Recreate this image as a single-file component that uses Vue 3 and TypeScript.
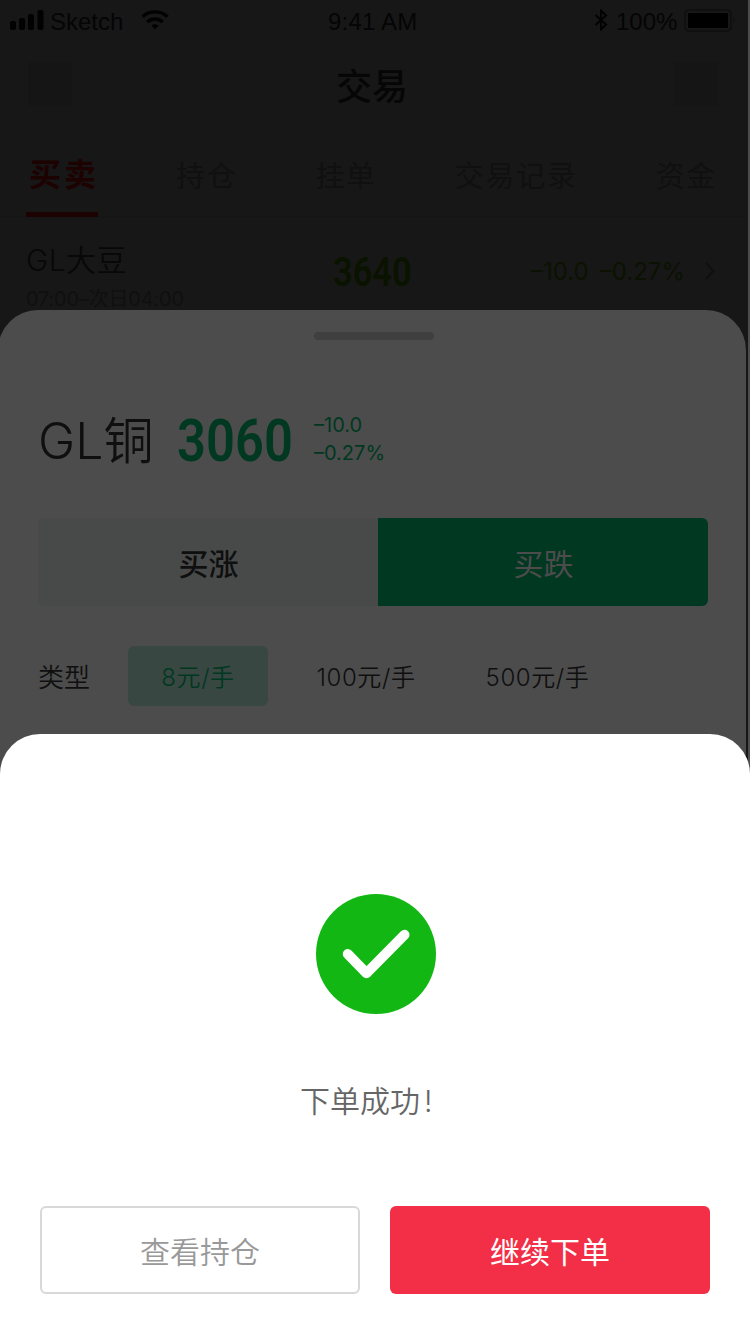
<script setup lang="ts">
interface Tab {
  label: string
  active?: boolean
}

const tabs: Tab[] = [
  { label: '买卖', active: true },
  { label: '持仓' },
  { label: '挂单' },
  { label: '交易记录' },
  { label: '资金' },
]

const lots: Tab[] = [
  { label: '8元/手', active: true },
  { label: '100元/手' },
  { label: '500元/手' },
]
</script>

<template>
  <div class="screen">
    <div class="page">
      <div class="status">
        <svg class="signal" viewBox="0 0 34 22" width="34" height="22">
          <rect x="0" y="13" width="6" height="9" rx="2" />
          <rect x="9" y="10" width="6" height="12" rx="2" />
          <rect x="18" y="6" width="6" height="16" rx="2" />
          <rect x="27.5" y="2" width="6" height="20" rx="2" />
        </svg>
        <span class="carrier">Sketch</span>
        <svg class="wifi" viewBox="0 0 28 20" width="28" height="20">
          <path d="M1.5 6.8C8.5 .2 19.5 .2 26.500 6.8" />
          <path d="M6.300 12C10.700 8 17.300 8 21.700 12" />
          <path class="solid" d="M14 19.500L10.400 15.600Q14 12.800 17.600 15.600Z" />
        </svg>
        <span class="time">9:41 AM</span>
        <svg class="bluetooth" viewBox="0 0 14 22" width="14" height="22">
          <path d="M1.500 6L12 15.500L7 20.500V1.500L12 6.500L1.500 16" />
        </svg>
        <span class="percent">100%</span>
        <svg class="battery" viewBox="0 0 52 24" width="52" height="24">
          <rect class="shell" x="1" y="1" width="46" height="21" rx="4.500" />
          <rect class="charge" x="4" y="4" width="40" height="15" rx="1" />
          <path class="cap" d="M49 8Q52 11.500 49 15Z" />
        </svg>
      </div>
      <header class="navbar">
        <i class="slot"></i>
        <h1>交易</h1>
        <i class="slot"></i>
      </header>
      <nav class="tabs">
        <span v-for="t in tabs" :key="t.label" class="tab" :class="{ active: t.active }">{{ t.label }}</span>
      </nav>
      <div class="quote">
        <div class="names">
          <div class="name">GL大豆</div>
          <div class="hours">07:00–次日04:00</div>
        </div>
        <div class="last">3640</div>
        <div class="delta"><span>–10.0</span><span>–0.27%</span></div>
        <svg class="chevron" viewBox="0 0 10 18" width="10" height="18"><path d="M1 1L8.500 9L1 17" /></svg>
      </div>
    </div>

    <section class="order">
      <div class="grip"></div>
      <div class="head">
        <div class="title">GL铜</div>
        <div class="price">3060</div>
        <div class="change"><span>–10.0</span><span>–0.27%</span></div>
      </div>
      <div class="sides">
        <div class="side up">买涨</div>
        <div class="side down">买跌</div>
      </div>
      <div class="types">
        <span class="caption">类型</span>
        <span v-for="l in lots" :key="l.label" class="lot" :class="{ active: l.active }">{{ l.label }}</span>
      </div>
    </section>

    <section class="result">
      <svg class="tick" viewBox="0 0 120 120" width="120" height="120">
        <circle cx="60" cy="60" r="60" />
        <path d="M31.800 60L50.500 79.200L88.500 40.800" />
      </svg>
      <p>下单成功<span class="mark">!</span></p>
      <div class="actions">
        <button class="btn ghost">查看持仓</button>
        <button class="btn primary">继续下单</button>
      </div>
    </section>
  </div>
</template>

<style>
body {
  margin: 0;
}
</style>

<style scoped>
.screen {
  position: relative;
  width: 750px;
  height: 1334px;
  overflow: hidden;
  background: linear-gradient(90deg, #171717 748px, #4c4c4c 748px);
  font-family: Inter, 'Noto Sans CJK SC', sans-serif;
  white-space: nowrap;
}
.page {
  width: 748px;
}
.status {
  display: flex;
  height: 42px;
  align-items: center;
  padding-left: 10px;
  font: 24px/42px 'Liberation Sans', Arial, sans-serif;
  color: #050505;
}
.status span {
  padding-top: 2px;
}
.status svg {
  flex: none;
}
.signal {
  margin-top: -4px;
  fill: #020202;
}
.carrier {
  width: 73px;
  margin-left: 6px;
}
.wifi {
  margin: -3px 0 0 18px;
  fill: none;
  stroke: #020202;
  stroke-width: 3.4;
}
.wifi .solid {
  fill: #020202;
  stroke: none;
}
.time {
  width: 90px;
  margin-left: 159px;
  letter-spacing: 0.2px;
}
.bluetooth {
  margin: -3px 0 0 176px;
  fill: none;
  stroke: #020202;
  stroke-width: 2;
}
.percent {
  width: 61px;
  margin-left: 8px;
}
.battery {
  margin: 0 0 0 7px;
}
.shell {
  fill: none;
  stroke: #101010;
  stroke-width: 2;
}
.charge {
  fill: #000;
}
.cap {
  fill: #101010;
}
.navbar {
  display: flex;
  height: 84px;
  align-items: center;
  justify-content: space-between;
  padding: 0 30px 0 28px;
}
.slot {
  width: 44px;
  height: 44px;
  background: #151515;
}
h1 {
  margin: 6px 2px 0 0;
  font-size: 36px;
  line-height: 44px;
  font-weight: 500;
  color: #060606;
}
.tabs {
  display: flex;
  gap: 78px;
  height: 91px;
  box-sizing: border-box;
  border-bottom: 1px solid #151515;
  padding: 20px 0 0 26px;
}
.tab {
  height: 60px;
  font-size: 29px;
  line-height: 62px;
  letter-spacing: 1.7px;
  color: #101010;
}
.tab.active {
  width: 72px;
  height: 66px;
  border-bottom: 5px solid #1d0202;
  font-size: 32px;
  line-height: 58px;
  font-weight: 700;
  letter-spacing: 3px;
  text-indent: 3px;
  color: #1d0202;
}
.quote {
  display: flex;
  padding: 23px 0 0 26px;
}
.names {
  width: 307px;
}
.name {
  font-size: 30px;
  line-height: 40px;
  letter-spacing: 0.4px;
  font-weight: 350;
  color: #080808;
}
.hours {
  margin-top: 4px;
  font-size: 20px;
  line-height: 30px;
  letter-spacing: -0.2px;
  color: #101010;
}
.last {
  width: 198px;
  font: 600 40px/66px Roboto, sans-serif;
  transform: scaleX(0.86);
  transform-origin: left;
  color: #0a1300;
}
.delta {
  display: flex;
  width: 174px;
  gap: 11px;
  font-size: 24px;
  line-height: 63px;
  color: #0b1201;
}
.chevron {
  margin-top: 22px;
  fill: none;
  stroke: #101010;
  stroke-width: 2;
}
.order {
  position: absolute;
  top: 310px;
  left: -2px;
  width: 748px;
  height: 1024px;
  box-sizing: border-box;
  border-radius: 40px 40px 0 0;
  padding: 22px 38px 0 40px;
  background: #4c4c4c;
}
.grip {
  width: 120px;
  height: 8px;
  margin-left: 276px;
  border-radius: 4px;
  background: #3f3f3f;
}
.head {
  display: flex;
  height: 72px;
  align-items: center;
  margin-top: 65px;
}
.title {
  width: 139px;
  font-size: 50px;
  line-height: 72px;
  font-weight: 350;
  color: #0f0f0f;
}
.price {
  width: 137px;
  font: 600 60px/72px Roboto, sans-serif;
  transform: scaleX(0.845);
  transform-origin: left;
  color: #003821;
}
.change {
  display: flex;
  flex-direction: column;
  margin-top: -4px;
  font-size: 20px;
  line-height: 28px;
  color: #003821;
}
.sides {
  display: flex;
  height: 88px;
  margin-top: 41px;
  overflow: hidden;
  border-radius: 6px;
}
.side {
  font-size: 30px;
  line-height: 93px;
  text-align: center;
  text-indent: 1px;
}
.up {
  width: 340px;
  background: #474a49;
  font-weight: 500;
  color: #0f0f0f;
}
.down {
  width: 330px;
  background: #003821;
  color: #4c4c4c;
}
.types {
  display: flex;
  align-items: center;
  margin-top: 40px;
}
.caption {
  width: 90px;
  padding-bottom: 2px;
  font-size: 26px;
  font-weight: 350;
  color: #0f0f0f;
}
.lot {
  width: 140px;
  height: 60px;
  margin-right: 28px;
  border-radius: 6px;
  font-size: 24px;
  line-height: 64px;
  letter-spacing: 0.6px;
  font-weight: 350;
  text-align: center;
  color: #0f0f0f;
}
.lot:last-child {
  text-indent: 7px;
}
.lot.active {
  background: #394742;
  color: #003821;
}
.result {
  position: absolute;
  top: 734px;
  left: 0;
  display: flex;
  width: 750px;
  height: 600px;
  box-sizing: border-box;
  flex-direction: column;
  align-items: center;
  border-radius: 40px 40px 0 0;
  padding: 160px 40px 40px;
  background: #fff;
}
.tick {
  margin-left: 2px;
}
.tick circle {
  fill: #13b713;
}
.tick path {
  fill: none;
  stroke: #fff;
  stroke-width: 10;
  stroke-linecap: round;
  stroke-linejoin: round;
}
p {
  width: 150px;
  margin: 65px 0 0;
  font-size: 30px;
  line-height: 44px;
  font-weight: 350;
  color: #666;
}
.mark {
  margin-left: 4px;
}
.actions {
  display: flex;
  gap: 30px;
  margin-top: auto;
}
.btn {
  width: 320px;
  height: 88px;
  box-sizing: border-box;
  border: 0;
  border-radius: 6px;
  padding: 0;
  font-family: inherit;
  font-size: 30px;
  font-weight: 350;
}
.ghost {
  border: 2px solid #d8d8d8;
  background: #fff;
  color: #999;
}
.primary {
  background: #f22f46;
  font-weight: 400;
  color: #fff;
}
</style>
